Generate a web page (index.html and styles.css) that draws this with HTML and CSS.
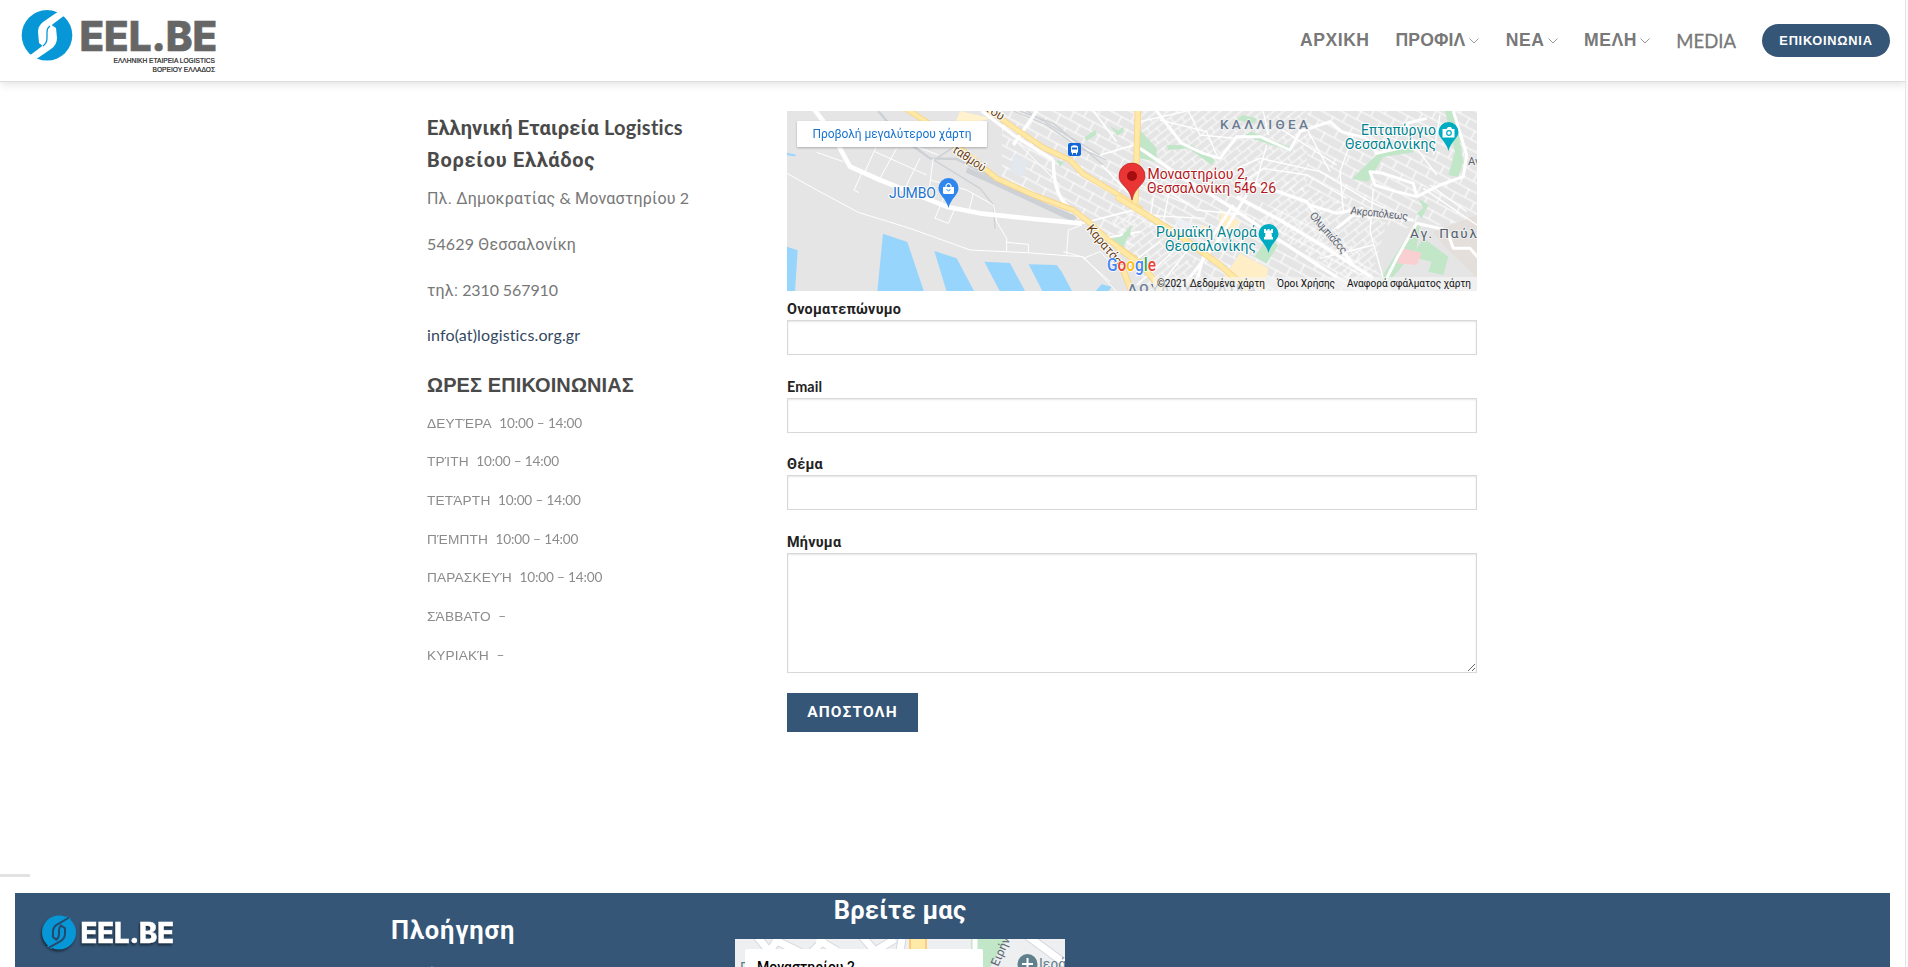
FILE: index.html
```html
<!DOCTYPE html>
<html lang="el">
<head>
<meta charset="utf-8">
<title>Επικοινωνία – EEL.BE</title>
<link rel="stylesheet" href="styles.css">
</head>
<body>
<header class="header">
  <a class="logo" href="#">
    <svg width="210" height="80" viewBox="0 0 210 80">
      <circle cx="47" cy="35.300" r="25.300" fill="#0797d7"/>
      <path d="M59 11 L65 15 L53 24 Q48 28 48 34 L48 40 Q48 44 44 47 L39 43 L38 32 Q38 26 43 22 Z M35 60 L29 56 L41 47 Q46 43 46 37 L46 30 Q46 26 50 24 L56 28 L57 38 Q57 45 51 49 Z" fill="#fff"/>
      <path d="M50 26 Q47 28 47 32 L47 38 Q47 43 43 46" fill="none" stroke="#0797d7" stroke-width="1.300"/>
      <text class="logo-name" x="79.500" y="50.500" textLength="137.500" lengthAdjust="spacingAndGlyphs">EEL.BE</text>
      <text class="logo-sub" x="113.500" y="63.300" textLength="101.500" lengthAdjust="spacingAndGlyphs">ΕΛΛΗΝΙΚΗ ΕΤΑΙΡΕΙΑ LOGISTICS</text>
      <text class="logo-sub" x="152.500" y="71.600" textLength="62.500" lengthAdjust="spacingAndGlyphs">ΒΟΡΕΙΟΥ ΕΛΛΑΔΟΣ</text>
    </svg>
  </a>
  <nav class="nav">
    <a class="n1" href="#">ΑΡΧΙΚΗ</a>
    <a class="n2" href="#">ΠΡΟΦΙΛ<svg class="chev" viewBox="0 0 10 6"><path d="M.5.500 5 5 9.500.500"/></svg></a>
    <a class="n3" href="#">ΝΕΑ<svg class="chev" viewBox="0 0 10 6"><path d="M.5.500 5 5 9.500.500"/></svg></a>
    <a class="n4" href="#">ΜΕΛΗ<svg class="chev" viewBox="0 0 10 6"><path d="M.5.500 5 5 9.500.500"/></svg></a>
    <a class="n5" href="#">MEDIA</a>
    <a class="nav-button" href="#">ΕΠΙΚΟΙΝΩΝΙΑ</a>
  </nav>
</header>
<main class="content">
  <section class="info">
    <h3 class="title">Ελληνική Εταιρεία <span class="latin">Logistics</span><br><span class="region">Βορείου Ελλάδος</span></h3>
    <p class="line">Πλ. Δημοκρατίας <span class="latin">&amp;</span> Μοναστηρίου <span class="latin">2</span></p>
    <p class="line"><span class="latin">54629</span> Θεσσαλονίκη</p>
    <p class="line">τηλ: <span class="latin phone">2310 567910</span></p>
    <p class="line"><a class="latin mail" href="#">info(at)logistics.org.gr</a></p>
    <h3 class="title hours-title">ΩΡΕΣ ΕΠΙΚΟΙΝΩΝΙΑΣ</h3>
    <ul class="hours">
      <li><span>ΔΕΥΤΈΡΑ</span>10:00 – 14:00</li>
      <li><span>ΤΡΊΤΗ</span>10:00 – 14:00</li>
      <li><span>ΤΕΤΆΡΤΗ</span>10:00 – 14:00</li>
      <li><span>ΠΈΜΠΤΗ</span>10:00 – 14:00</li>
      <li><span>ΠΑΡΑΣΚΕΥΉ</span>10:00 – 14:00</li>
      <li><span>ΣΆΒΒΑΤΟ</span>–</li>
      <li><span>ΚΥΡΙΑΚΉ</span>–</li>
    </ul>
  </section>
  <section class="contact">
    <svg class="map" width="690" height="180" viewBox="0 0 690 180">
      <defs>
        <pattern id="streets" width="22" height="18" patternUnits="userSpaceOnUse" patternTransform="rotate(28)"><path d="M0 1H22M0 10H22M1 0V10M12 10V18" stroke="#fff" stroke-width="1.100" fill="none"/></pattern>
        <pattern id="blocks" width="17" height="13" patternUnits="userSpaceOnUse" patternTransform="rotate(-38)"><path d="M0 1H17M0 7H17M1 0V7M9 7V13" stroke="#fff" stroke-width=".9" fill="none"/></pattern>
      </defs>
      <rect width="690" height="180" fill="#e5e5e5"/>
      <path d="M215 0H348V150L300 112 215 75Z" fill="url(#streets)"/>
      <path d="M348 0H520V80L440 72 352 45Z" fill="url(#blocks)"/>
      <path d="M520 0H690V110L610 118 520 80Z" fill="url(#streets)"/>
      <path d="M350 45 440 75 560 130 610 180H440L348 105Z" fill="url(#streets)"/>
      <path d="M325 110 350 95 430 180H355Z" fill="url(#blocks)"/>
      <path d="M500 70 600 112 580 180 470 110Z" fill="url(#blocks)"/>
      <g transform="translate(-7 -6) scale(.33333)">
        <g fill="#97d5fc"><path d="M21 425 53 436 45 560H21ZM309 386 382 411 432 560H292ZM463 438 530 460 583 560H500ZM613 470 690 474 736 560H660ZM746 478 830 480 845 500 877 560H788ZM945 560 965 538 995 545 985 560ZM21 143 48 149 46 154 21 151Z"/></g>
        <g fill="#c1e6c8"><path d="M913 98 945 75 950 88 920 108ZM990 62 1015 78 1030 65 1030 80 1012 92ZM830 165 852 170 840 186ZM985 405 1045 388 1030 430Z"/></g>
        <path d="M700 150 745 165 730 215 690 200Z" fill="#e3e7ee"/>
        <path d="M540 18 630 40 560 60 530 130 590 155 560 165 500 120Z" fill="#fff2cc"/>
        <g fill="none" stroke="#cdd1d5" stroke-linejoin="round">
          <path stroke-width="7" d="M295 18 330 60 395 120 450 160 530 162 640 220 760 285 900 340"/>
          <path stroke-width="16" d="M560 195 650 235 790 300 885 345"/>
          <path stroke-width="4" d="M450 158 600 250 640 300 645 370M470 160 530 120M700 18 800 60 900 130 980 165M720 18 820 55 970 180M740 18 960 150"/>
        </g>
        <g fill="none" stroke="#fff" stroke-linejoin="round">
          <path stroke-width="14" d="M100 10 150 75 180 130 210 185 300 225 400 265 500 305 600 325 760 342 905 355"/>
          <path stroke-width="10" d="M605 18 700 90 820 165M820 165Q820 250 850 290L900 340M770 18 700 120"/>
          <path stroke-width="5" d="M905 355 1080 310M940 18 1010 110M960 150 1080 115M965 180 1070 290M970 400 1080 380"/>
          <path stroke-width="3" d="M21 205 110 255 235 322 390 370 570 435 740 443 860 452 910 455 1010 560M680 440 680 400 650 350 640 300 560 255 450 225M680 412 745 418 745 443M860 450 865 375 905 360M110 142 190 170M245 205 222 255 237 263M300 100 255 200M350 130 300 220M420 160 375 250M320 90 475 150M285 140 440 210M460 160 445 270M490 280 465 340 505 355 525 310M580 265 565 325M720 120 840 240M650 18 760 120M910 460 960 440 1010 490M850 440 905 455 990 530"/>
        </g>
        <g fill="none" stroke-linejoin="round">
          <g stroke="#fad486" stroke-width="17"><path d="M600 -5 690 60 790 128 870 165 910 207 1000 260 1085 315"/><path d="M360 0 470 70 600 180 650 220 760 270 880 315 925 350 985 405 1085 475"/></g>
          <g stroke="#ffe9a5" stroke-width="12"><path d="M600 -5 690 60 790 128 870 165 910 207 1000 260 1085 315"/><path d="M360 0 470 70 600 180 650 220 760 270 880 315 925 350 985 405 1085 475"/></g>
        </g>
      </g>
      <g transform="translate(333 -6) scale(.33333)">
        <g fill="#c1e6c8"><path d="M55 70 110 130 110 170 60 160ZM140 120 215 120 285 165 275 180 205 130 145 135ZM375 90 395 80 455 105 520 130 515 140 390 98ZM695 222 780 140 880 125 880 142 790 155 745 230ZM975 18 1005 18 1030 170 1015 215 985 210 1005 140ZM895 280 925 300 905 340 890 325 910 310ZM0 400 35 360 30 395ZM405 455 440 400 475 420 440 475ZM880 365 900 355 890 430 800 540 770 540ZM910 400 985 455 970 510 925 500 935 470 875 455ZM345 45 370 30 410 40 405 55Z"/></g>
        <path d="M1071 330 940 380 970 420 1071 520Z" fill="#e5dfdc"/>
        <path d="M850 430 905 445 890 480 830 475Z" fill="#facfd2"/>
        <path d="M360 445 445 490 430 560 310 520ZM210 350 280 370 240 400ZM305 320 360 350 340 380 295 365Z" fill="#ffeec6"/>
        <path d="M160 340 245 360 235 410 190 380Z" fill="#eceff3"/>
        <g fill="none" stroke="#fff" stroke-linejoin="round">
          <path stroke-width="10" d="M60 130 170 205 330 305 470 400 600 485 720 560M350 275 480 345 620 430 760 520M385 230 560 290 700 480"/>
          <path stroke-width="9" d="M110 18 185 115 250 145 300 160 350 95 420 95 510 135 540 80 630 50 665 80 740 100 770 145 880 120 860 55 920 40M750 200 790 205 880 235 890 275 830 260 765 240ZM890 275 960 240 1030 215 1040 150 1000 18M890 355 980 375 1000 430 1050 430 1085 470M890 355 830 460 780 560M650 370 700 330 880 345M380 270 300 400 200 530M340 300 260 420 230 530M570 300 650 325 730 310"/>
          <path stroke-width="4" d="M60 50 200 18M120 45 260 80 290 150M205 18 240 90 350 100M430 20 445 90M480 70 650 180M560 70 630 200M350 190 420 160 600 200 750 290 860 340M370 230 430 190 560 210 680 280M440 120 400 260M700 90 660 200 670 320M60 200 230 315 380 330M60 240 210 300M100 280 90 340M150 250 130 350M60 330 250 340M760 250 750 380 790 520M600 460 760 420M890 130 950 210M910 250 1071 360M930 240 1040 320M960 30 940 150M0 500 120 410M50 540 170 430M120 540 200 440"/>
        </g>
        <g fill="none" stroke-linejoin="round">
          <g stroke="#fad486" stroke-width="19"><path d="M54 0 46 295"/><path d="M-10 275 80 330 180 393 300 480 390 560"/><path d="M-10 425 70 485 130 560M0 470 35 560"/></g>
          <g stroke="#ffe9a5" stroke-width="14"><path d="M54 0 46 295"/><path d="M-10 275 80 330 180 393 300 480 390 560"/><path d="M-10 425 70 485 130 560M0 470 35 560"/></g>
        </g>
      </g>
      <g class="road-label">
        <text transform="translate(197 -1) rotate(32)">του</text>
        <text transform="translate(164 40) rotate(34)" textLength="38" lengthAdjust="spacingAndGlyphs">ταθμού</text>
        <text transform="translate(299 118) rotate(50)" textLength="55">Καρατάσο</text>
      </g>
      <g class="street-label">
        <text transform="translate(522 105) rotate(49)" textLength="51">Ολυμπιάδος</text>
        <text transform="translate(563 103) rotate(6)" textLength="58">Ακροπόλεως</text>
        <text x="681" y="54">Αν</text>
      </g>
      <text class="area" x="433" y="18" textLength="88">ΚΑΛΛΙΘΕΑ</text>
      <text class="area" x="341" y="182" textLength="128">ΛΟΥΛΟΥΔΑΔΙΚΑ</text>
      <text class="area area-low" x="623" y="127" textLength="67">Αγ. Παύλ</text>
      <g>
        <path d="M161.500 97C159 87 151.500 84 151.500 77a10 10 0 0 1 20 0C171.500 84 164 87 161.500 97Z" fill="#2f87ee"/>
        <path d="M156 76h11v5.500q0 1.500-1.500 1.500h-8q-1.500 0-1.500-1.500Z" fill="#fff"/><path d="M159 76v-1.500q2.500-4 5 0V76" fill="none" stroke="#fff" stroke-width="1.200"/><path d="M159.500 78.500q2 2.500 4 0" fill="none" stroke="#2f87ee"/>
        <text class="poi blue" x="102" y="87" textLength="47" >JUMBO</text>
      </g>
      <g><rect x="281" y="32" width="13" height="13" rx="2" fill="#1267d8"/><path d="M284 35.500q3.500-2.500 7 0v5.500l-1 1v1.500h-1V42h-3v1.500h-1V42l-1-1Z" fill="#fff"/><path d="M285 36.500h5v2h-5Z" fill="#1267d8"/></g>
      <g>
        <path d="M345 89C342 75 332 74 332 65a13 13 0 0 1 26 0C358 74 348 75 345 89Z" fill="#ea3535" stroke="#b31412" stroke-width=".6"/>
        <circle cx="345" cy="65" r="5" fill="#a50e0e"/>
        <text class="poi red" x="360.500" y="68" textLength="100">Μοναστηρίου 2,</text>
        <text class="poi red" x="360" y="82" textLength="129">Θεσσαλονίκη 546 26</text>
      </g>
      <g>
        <path d="M481.500 142C479 132 471.500 129 471.500 123a10 10 0 0 1 20 0C491.500 129 484 132 481.500 142Z" fill="#00acc1"/>
        <path d="M477 118h2v1.500h1.500V118h2v1.500h1.500V118h2v4h-1.500l.5 4h1v2.500h-9V126h1l.5-4H477Z" fill="#fff"/>
        <text class="poi teal" x="369" y="126" textLength="101">Ρωμαϊκή Αγορά</text>
        <text class="poi teal" x="378" y="140" textLength="91">Θεσσαλονίκης</text>
      </g>
      <g>
        <path d="M661.500 40C659 30 651.500 27 651.500 21a10 10 0 0 1 20 0C671.500 27 664 30 661.500 40Z" fill="#00acc1"/>
        <path d="M655.500 18h4l1.500-2h3l1 2h2.500v8.500h-12Z" fill="#fff"/><circle cx="662" cy="22" r="2.300" fill="none" stroke="#00acc1" stroke-width="1.200"/>
        <text class="poi teal" x="574" y="24" textLength="75">Επταπύργιο</text>
        <text class="poi teal" x="558" y="38" textLength="91">Θεσσαλονίκης</text>
      </g>
      <text class="google" x="320" y="160" textLength="49" lengthAdjust="spacingAndGlyphs"><tspan fill="#4285f4">G</tspan><tspan fill="#ea4335">o</tspan><tspan fill="#fbbc04">o</tspan><tspan fill="#4285f4">g</tspan><tspan fill="#34a853">l</tspan><tspan fill="#ea4335">e</tspan></text>
      <rect x="366" y="166" width="324" height="14" fill="#f5f5f5" opacity=".7"/>
      <g class="credits"><text x="370" y="176" textLength="108">©2021 Δεδομένα χάρτη</text><text x="490" y="176" textLength="58">Όροι Χρήσης</text><text x="560" y="176" textLength="124">Αναφορά σφάλματος χάρτη</text></g>
      <g class="bigger"><rect x="10" y="10" width="190" height="26" rx="1" fill="#fff"/><text x="25.500" y="27" textLength="159">Προβολή μεγαλύτερου χάρτη</text></g>
    </svg>
    <form class="form">
      <label>Ονοματεπώνυμο<input type="text"></label>
      <label class="latin">Email<input type="text"></label>
      <label>Θέμα<input type="text"></label>
      <label>Μήνυμα<textarea></textarea></label>
      <button class="send" type="button">ΑΠΟΣΤΟΛΗ</button>
    </form>
  </section>
</main>
<div class="divider"></div>
<footer class="footer">
  <svg class="footer-logo" width="160" height="60" viewBox="0 0 160 60">
    <circle class="shade" cx="44" cy="35.500" r="17" fill="#0797d7"/>
    <g transform="translate(12.500 11.800) scale(.67)">
      <path d="M59 11 L65 15 L53 24 Q48 28 48 34 L48 40 Q48 44 44 47 L39 43 L38 32 Q38 26 43 22 Z M35 60 L29 56 L41 47 Q46 43 46 37 L46 30 Q46 26 50 24 L56 28 L57 38 Q57 45 51 49 Z" fill="#0797d7"/>
      <path d="M62 13 L47 22 Q38 26 38 34 V42 L43 46 Q47 43 47 38 V32 Q47 28 50 25 L56 29 V37 Q56 44 50 48 L32 58" fill="none" stroke="#27486a" stroke-width="3"/>
    </g>
    <text class="footer-name shade" x="65.500" y="46" textLength="93.500" lengthAdjust="spacingAndGlyphs">EEL.BE</text>
  </svg>
  <section class="browse">
    <h3>Πλοήγηση</h3>
    <a href="#">Προφίλ</a>
  </section>
  <section class="find">
    <h3>Βρείτε μας</h3>
    <svg width="330" height="160" viewBox="0 0 330 160">
      <rect width="330" height="160" fill="#eeeff1"/>
      <g fill="none" stroke="#d5d9df" stroke-width="9"><path d="M20 -5 34 12M30 20 45 -4M38 0 75 18M70 20 90 0M82 0 102 12M125 -5 140 12 160 0M167 0 162 30M290 -5 340 32"/></g>
      <g fill="none" stroke="#fff" stroke-width="7"><path d="M20 -5 34 12M30 20 45 -4M38 0 75 18M70 20 90 0M82 0 102 12M125 -5 140 12 160 0M167 0 162 30M290 -5 340 32"/></g>
      <path d="M174 0h18v30h-18Z" fill="#ffc978"/><path d="M176 0h14v30h-14Z" fill="#ffeaa7"/>
      <path d="M236 0h36L248 40H236Z" fill="#c1e6c8"/><path d="M240 0V30" stroke="#fff" stroke-width="5"/>
      <text class="find-street" transform="translate(263 28) rotate(-66)">Ειρήνη</text>
      <circle cx="292.500" cy="25" r="10" fill="#61808d"/><path d="M292.500 19v12M287 25h11" stroke="#fff" stroke-width="2"/>
      <text class="find-place" x="304" y="30">Ιερά</text>
      <text class="find-place" x="5" y="34">Γ</text>
      <rect x="10" y="10" width="238" height="120" rx="2" fill="#fff"/>
      <text class="find-card" x="22" y="32.500" textLength="98">Μοναστηρίου 2</text>
    </svg>
  </section>
</footer>
<div class="edge"></div>
</body>
</html>
```
FILE: styles.css
```css
* { box-sizing: border-box; }
html, body { height: 967px; overflow: hidden; }
body { margin: 0; background: #fff; color: #777; font: 16px/25.6px Lato, "Open Sans", sans-serif; }
a { color: inherit; text-decoration: none; }
h3, p, ul { margin: 0; padding: 0; }
.header { display: flex; justify-content: space-between; width: 1906px; height: 82px; background: #fff; border-bottom: 1px solid #ddd; box-shadow: 1px 1px 10px rgba(0,0,0,.15); }
.logo { height: 80px; }
.logo svg { display: block; overflow: visible; }
.logo-name { font: 800 41.500px Inter, sans-serif; fill: #666; stroke: #666; stroke-width: .7px; }
.logo-sub { font: 6.800px "Liberation Sans", sans-serif; fill: #222; stroke: #222; stroke-width: .2px; }
.nav { display: flex; align-items: center; height: 81px; padding-right: 16px; font-family: "Liberation Sans", sans-serif; font-size: 17.600px; font-weight: 700; letter-spacing: .5px; color: rgba(102,102,102,.9); }
.nav a { display: flex; align-items: center; margin-right: 26px; white-space: nowrap; }
.nav .n2 { letter-spacing: .1px; margin-right: 27px; }
.nav .n5 { font: 400 18.500px Lato, sans-serif; letter-spacing: 0; -webkit-text-stroke: .3px #777; }
.chev { width: 10px; height: 6px; margin-left: 3.500px; fill: none; stroke: #999; }
.nav .nav-button { justify-content: center; width: 128px; height: 33px; margin: 0; border-radius: 17px; background: #355677; color: #fff; font-size: 12.800px; letter-spacing: .75px; }
.content { display: flex; gap: 60px; height: 792px; padding: 29px 0 0 427px; }
.info { width: 300px; font-family: Roboto, sans-serif; }
.info .latin { font-family: Lato, sans-serif; font-variant-ligatures: none; letter-spacing: .15px; }
.info .phone { letter-spacing: -.1px; }
.title { color: #4a4a4a; font-size: 20px; line-height: 32px; letter-spacing: .15px; white-space: nowrap; }
.title .latin { letter-spacing: .25px; }
.region { letter-spacing: .7px; }
.line { height: 45.800px; line-height: 25.600px; letter-spacing: .2px; white-space: nowrap; }
.title + .line { margin-top: 9px; }
.mail { color: #334862; }
.hours-title { padding-top: 1px; font-family: "Liberation Sans", sans-serif; font-size: 20px; letter-spacing: .1px; }
.hours { list-style: none; margin-top: 9.500px; font-family: Lato, sans-serif; font-size: 13.600px; letter-spacing: -.15px; opacity: .85; }
.hours li { height: 38.650px; }
.hours span { margin-right: 7.500px; font-family: "Liberation Sans", sans-serif; font-size: 13.700px; letter-spacing: .15px; }
.contact { width: 690px; }
.map { display: block; }
.map text { font-family: Roboto, sans-serif; }
.road-label { font-size: 12.500px; fill: #6b3f15; paint-order: stroke; stroke: #fff; stroke-width: 2px; }
.street-label { font-size: 11px; fill: #5b6470; paint-order: stroke; stroke: #eee; stroke-width: 2px; }
.area { font-size: 13.500px; font-weight: 500; fill: #6a7b92; paint-order: stroke; stroke: #eee; stroke-width: 2px; }
.area-low { fill: #4f5d6d; font-weight: 400; }
.poi { font-size: 14px; paint-order: stroke; stroke: #fff; stroke-width: 2px; }
.blue { fill: #1a73d0; }
.red { fill: #b31820; }
.teal { fill: #00838f; }
.google { font-size: 18px; font-weight: 500; paint-order: stroke; stroke: #fff; stroke-width: 1.500px; }
.credits { font-size: 10px; fill: #111; }
.bigger { filter: drop-shadow(0 1px 1px rgba(0,0,0,.25)); }
.bigger text { font-size: 12px; fill: #1a73d0; }
.form label { display: block; height: 77.600px; padding-top: 9px; color: #222; font: 700 14.400px/20px Roboto, sans-serif; letter-spacing: .25px; }
.form .latin { padding-top: 6px; font-family: Lato, sans-serif; line-height: 23px; letter-spacing: .1px; }
.form label:nth-of-type(4) { height: 169px; }
.form input, .form textarea { display: block; width: 690px; height: 35px; margin: 0; border: 1px solid #d8d8d8; border-radius: 0; background: #fff; box-shadow: inset 0 1px 2px rgba(0,0,0,.1); outline: 0; }
.form textarea { height: 120px; resize: vertical; }
.send { display: block; width: 131px; height: 39px; border: 0; padding: 0; background: #355677; color: #fff; font: 700 15.500px Roboto, sans-serif; letter-spacing: 1.100px; }
.divider { width: 30px; height: 3px; background: #e2e2e2; }
.footer { display: flex; width: 1875px; height: 74px; margin: 16px 0 0 15px; overflow: hidden; background: #355677; }
.footer-logo { flex: none; width: 160px; height: 60px; margin-top: 4px; overflow: visible; }
.shade { filter: drop-shadow(-1px 2px 1px rgba(0,0,0,.5)); }
.footer-name { font: 800 28px Inter, sans-serif; fill: #fff; stroke: #fff; stroke-width: .5px; }
.browse { width: 344px; margin-left: 216px; color: #a2b6c4; font-family: Roboto, sans-serif; }
.browse h3 { margin-top: 20px; color: #fff; font-size: 25.500px; line-height: 34px; letter-spacing: .9px; }
.browse a { display: block; margin-top: 14px; font-size: 15px; }
.find { width: 330px; }
.find h3 { height: 46px; color: #fff; font: 700 25.500px/35px Roboto, sans-serif; letter-spacing: .2px; text-align: center; }
.find svg { display: block; }
.find-street { font: 12px Roboto, sans-serif; fill: #5b6470; }
.find-place { font: 14px Roboto, sans-serif; fill: #607d8b; }
.find-card { font: 500 14px Roboto, sans-serif; fill: #000; }
.edge { position: absolute; top: 0; left: 1905px; width: 3px; height: 967px; border-left: 1px solid #e5e5e5; background: #fafafa; }
```
